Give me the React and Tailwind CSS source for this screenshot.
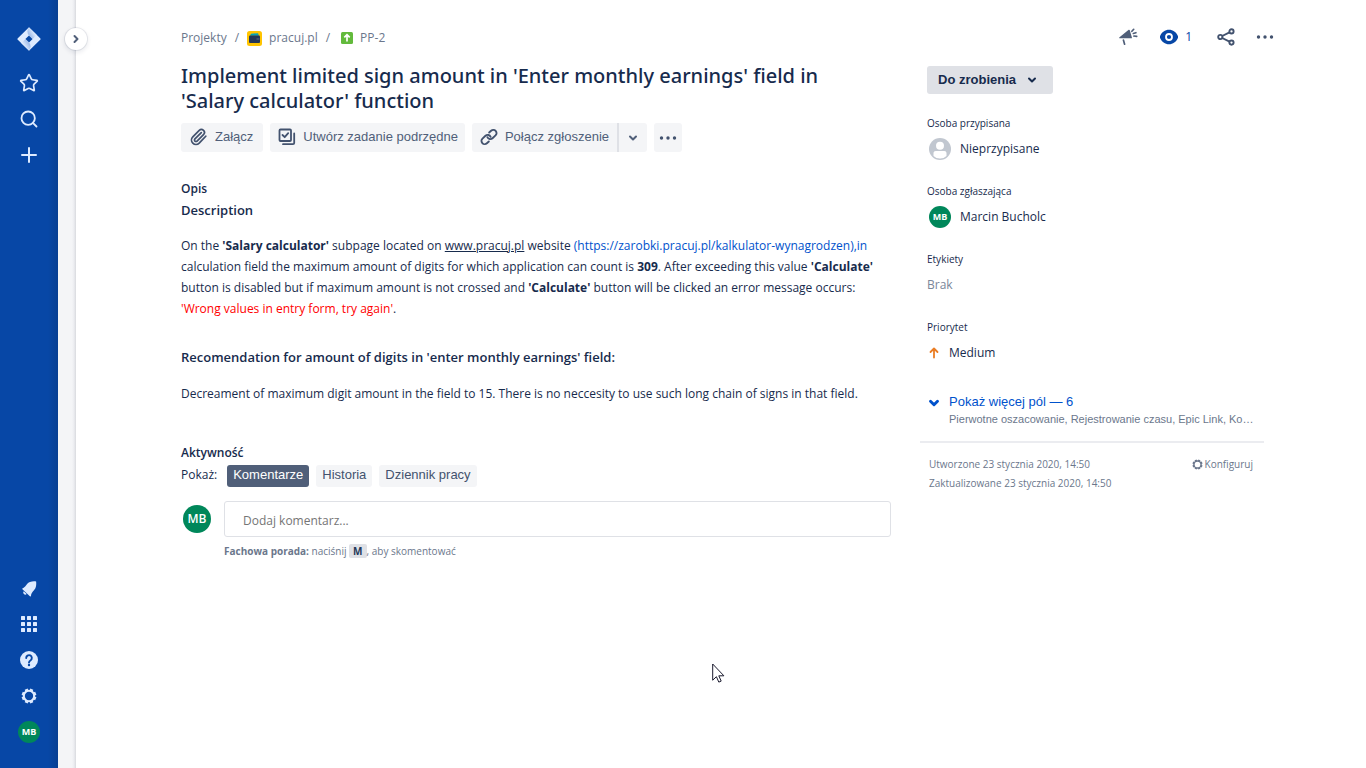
import React from "react";
import { Search, Star, Plus, ChevronRight, ChevronDown } from "lucide-react";

function JiraLogo() {
  return (
    <svg width="24" height="24" viewBox="0 0 24 24" aria-hidden="true">
      <defs>
        <linearGradient id="jiraA" x1="12" y1="8" x2="17" y2="5" gradientUnits="userSpaceOnUse">
          <stop offset="0" stopColor="#9dbae8" />
          <stop offset="1" stopColor="#deebff" />
        </linearGradient>
        <linearGradient id="jiraB" x1="12" y1="16" x2="7" y2="19" gradientUnits="userSpaceOnUse">
          <stop offset="0" stopColor="#9dbae8" />
          <stop offset="1" stopColor="#deebff" />
        </linearGradient>
      </defs>
      <path fill="#deebff" fillRule="evenodd" d="M12 .3 23.2 11.2a1.1 1.1 0 0 1 0 1.6L12 23.7.8 12.8a1.1 1.1 0 0 1 0-1.6zM12 8.4 8.4 12l3.6 3.6 3.6-3.6z" />
      <path fill="url(#jiraA)" d="M12 .5a5.800 5.800 0 0 0 0 7.900L15.600 12l4-4.300z" />
      <path fill="url(#jiraB)" d="M12 23.500a5.800 5.800 0 0 0 0-7.900L8.400 12l-4 4.300z" />
    </svg>
  );
}

function Gear({ size, color }) {
  return (
    <svg width={size} height={size} viewBox="0 0 20 20" fill="none" stroke={color} aria-hidden="true">
      <circle cx="10" cy="10" r="6.500" strokeWidth="2.600" />
      <g strokeWidth="4">
        {[22.5, 67.5, 112.5, 157.5, 202.5, 247.5, 292.5, 337.5].map((a) => (
          <path key={a} d="M10 4V.8" transform={`rotate(${a} 10 10)`} />
        ))}
      </g>
    </svg>
  );
}

function Bell() {
  return (
    <svg width="17" height="17" viewBox="0 0 18 18" fill="#deebff" aria-hidden="true">
      <path d="M1.800 8.800C5 7.600 5.800 3.300 9.500 2c2.200-.7 4.300-.8 6.500-.5.300 2.200.2 4.400-.5 6.500-1.200 3.500-4.400 4.500-4.900 8.700-.1.800-.7.900-1.200.4L1.500 9.900c-.4-.5-.3-.9.3-1.100z" />
      <path d="M2.900 11.800 6 14.900a2.200 2.200 0 0 1-3.100-3.100z" />
    </svg>
  );
}

function Grid() {
  return (
    <svg width="16" height="16" viewBox="0 0 16 16" fill="#deebff" aria-hidden="true">
      {[0, 6, 12].map((y) => [0, 6, 12].map((x) => <rect key={`${x}-${y}`} x={x} y={y} width="4" height="4" rx=".5" />))}
    </svg>
  );
}

function Help() {
  return (
    <svg width="18" height="18" viewBox="0 0 18 18" aria-hidden="true">
      <circle cx="9" cy="9" r="9" fill="#deebff" />
      <path d="M6.200 7a2.800 2.800 0 1 1 4.500 2.200C9.600 9.900 9 10.300 9 11.500" fill="none" stroke="#0747a6" strokeWidth="1.900" strokeLinecap="round" />
      <circle cx="9" cy="14" r="1.200" fill="#0747a6" />
    </svg>
  );
}

function Paperclip() {
  return (
    <svg width="18" height="18" viewBox="0 0 24 24" fill="none" stroke="#42526e" strokeWidth="2.300" strokeLinecap="round" strokeLinejoin="round" aria-hidden="true">
      <path d="m21 11-8.750 9.240a6 6 0 0 1-8.490-8.490l8.570-8.570A4 4 0 1 1 18 8.840l-8.590 8.570a2 2 0 0 1-2.830-2.830l8.490-8.480" />
    </svg>
  );
}

function Chain() {
  return (
    <svg width="18" height="18" viewBox="0 0 24 24" fill="none" stroke="#42526e" strokeWidth="2.500" strokeLinecap="round" strokeLinejoin="round" aria-hidden="true">
      <path d="M9.800 12.200a4.300 4.300 0 0 0 6.900 1.400l4-3.700a4.300 4.300 0 0 0-5.900-6.300l-2.600 2.400" />
      <path d="M14.200 11.800a4.300 4.300 0 0 0-6.900-1.400l-4 3.700a4.300 4.300 0 0 0 5.900 6.300l2.600-2.400" />
    </svg>
  );
}

function Megaphone() {
  return (
    <svg width="20" height="20" viewBox="0 0 20 20" fill="#505f79" aria-hidden="true">
      <path d="M1.500 10.200 10.700 2.800c.5-.3.900-.1 1.100.4l2.100 7.200c.1.500-.1.900-.7.900H2c-1 0-1.200-.6-.5-1.100z" />
      <g fill="none" stroke="#505f79" strokeWidth="1.700" strokeLinecap="round">
        <path d="m5.400 13 1.200 4.200M13.900 4.300l1.800-2M15.300 6.500l2.600-.8M15.900 9l2.800.4" />
      </g>
    </svg>
  );
}

function Eye() {
  return (
    <svg width="18" height="16" viewBox="0 0 18 16" aria-hidden="true">
      <path fill="#0747a6" d="M9 .8c4 0 7.200 2.400 8.800 6a2.700 2.700 0 0 1 0 2.400c-1.600 3.600-4.800 6-8.800 6s-7.200-2.400-8.800-6a2.700 2.700 0 0 1 0-2.400C1.800 3.200 5 .8 9 .8z" />
      <circle cx="9" cy="8" r="3" fill="#0747a6" stroke="#fff" strokeWidth="1.800" />
    </svg>
  );
}

function Share() {
  return (
    <svg width="18" height="18" viewBox="0 0 18 18" fill="none" stroke="#42526e" strokeWidth="1.900" aria-hidden="true">
      <circle cx="3.300" cy="9" r="2.100" />
      <circle cx="14.500" cy="3.400" r="2.100" />
      <circle cx="14.500" cy="14.600" r="2.100" />
      <path d="m5.200 8 7.300-3.700M5.200 10l7.300 3.700" />
    </svg>
  );
}

function Dots() {
  return (
    <svg width="18" height="4" viewBox="0 0 18 4" fill="#42526e" aria-hidden="true">
      <circle cx="2.500" cy="2" r="1.700" />
      <circle cx="9" cy="2" r="1.700" />
      <circle cx="15.500" cy="2" r="1.700" />
    </svg>
  );
}

function Subtask() {
  return (
    <svg width="18" height="18" viewBox="0 0 18 18" fill="none" stroke="#42526e" strokeWidth="1.800" strokeLinecap="round" strokeLinejoin="round" aria-hidden="true">
      <rect x="1.500" y="1.500" width="11.500" height="11.500" rx="1" />
      <path d="m4.500 7 2.200 2.200 3.500-4M5 16.200h10a1.200 1.200 0 0 0 1.200-1.200V5.500" />
    </svg>
  );
}

function ProjectIcon() {
  return (
    <svg width="15" height="15" viewBox="0 0 15 15" aria-hidden="true">
      <rect width="15" height="15" rx="2.500" fill="#ffc400" />
      <path d="M3 4.800 4 2.800l7-.6 1 2.600z" fill="#00a3bf" />
      <rect x="2" y="4.500" width="11" height="7.500" rx="1" fill="#253858" />
      <rect x="9.500" y="7" width="3" height="2" fill="#42526e" />
    </svg>
  );
}

function StoryIcon() {
  return (
    <svg width="12" height="12" viewBox="0 0 12 12" aria-hidden="true">
      <rect width="12" height="12" rx="1.500" fill="#63ba3c" />
      <path d="M6 9.500V3M3.300 5.400 6 2.800l2.700 2.600" fill="none" stroke="#fff" strokeWidth="1.700" />
    </svg>
  );
}

function PersonAvatar() {
  return (
    <svg width="22" height="22" viewBox="0 0 22 22" aria-hidden="true">
      <circle cx="11" cy="11" r="11" fill="#c1c7d0" />
      <circle cx="11" cy="7.800" r="4" fill="#fff" />
      <path d="M4.500 18v-2.800c0-1.300 1-2.200 2.200-2.200h8.600c1.200 0 2.200.9 2.200 2.200V18A9.300 9.300 0 0 1 11 20.500 9.300 9.300 0 0 1 4.500 18z" fill="#fff" />
    </svg>
  );
}

function Field({ label, children }) {
  return (
    <div className="mb-[21px]">
      <dt className="text-[10px] leading-5">{label}</dt>
      <dd className="mt-[5px] flex h-[22px] items-center text-[12px]">{children}</dd>
    </div>
  );
}

const navButton = "flex h-9 w-9 items-center justify-center text-[#deebff]";
const toolButton = "flex h-[29px] items-center bg-[#f4f5f7] font-['Liberation_Sans',sans-serif] text-[13px] text-[#505f79]";
const tabButton = "h-[22px] rounded-[3px] px-[6px] pb-0.5 font-['Liberation_Sans',sans-serif] text-[13px]";

function Sidebar() {
  return (
    <nav aria-label="Global" className="flex w-[58px] shrink-0 flex-col items-center justify-between bg-[#0747a6] bg-[linear-gradient(to_left,rgba(9,30,66,0.2),rgba(9,30,66,0)_10px)] pt-[21px] pb-[18px]">
      <div className="flex flex-col items-center">
        <button aria-label="Jira" className="mb-2 flex h-9 w-9 items-center justify-center"><JiraLogo /></button>
        <button aria-label="Ulubione" className={navButton}><Star size={20} strokeWidth={2} /></button>
        <button aria-label="Szukaj" className={navButton}><Search size={20} strokeWidth={2.2} /></button>
        <button aria-label="Utwórz" className={navButton}><Plus size={24} strokeWidth={2} /></button>
      </div>
      <div className="flex flex-col items-center">
        <button aria-label="Powiadomienia" className={navButton}><Bell /></button>
        <button aria-label="Aplikacje" className={navButton}><Grid /></button>
        <button aria-label="Pomoc" className={navButton}><Help /></button>
        <button aria-label="Ustawienia" className={navButton}><Gear size={16} color="#deebff" /></button>
        <button aria-label="Profil" className={navButton}>
          <span className="flex h-[22px] w-[22px] items-center justify-center rounded-full bg-[#00875a] text-[9px] font-bold text-white">MB</span>
        </button>
      </div>
    </nav>
  );
}

function Issue() {
  return (
    <article className="min-w-0 flex-1">
      <h1 className="mt-[13px] pr-5 font-['Noto_Sans',sans-serif] text-[20px] leading-[25px] font-medium">
        Implement limited sign amount in 'Enter monthly earnings' field in 'Salary calculator' function
      </h1>
      <div className="mt-[10px] flex gap-[7px]">
        <button className={`${toolButton} gap-[7px] rounded-[3px] pr-[10px] pb-0.5 pl-[9px]`}><Paperclip />Załącz</button>
        <button className={`${toolButton} gap-[7px] rounded-[3px] pr-[7px] pb-0.5 pl-2`}><Subtask />Utwórz zadanie podrzędne</button>
        <div className="flex">
          <button className={`${toolButton} gap-[7px] rounded-l-[3px] px-2 pb-0.5`}><Chain />Połącz zgłoszenie</button>
          <button aria-label="Więcej opcji połączenia" className={`${toolButton} rounded-r-[3px] border-l-2 border-[#dfe1e6] px-2`}><ChevronDown size={12} strokeWidth={4} /></button>
        </div>
        <button aria-label="Więcej" className={`${toolButton} rounded-[3px] px-[5px]`}><Dots /></button>
      </div>

      <h2 className="mt-[27px] text-[12px] leading-5 font-semibold">Opis</h2>
      <h3 className="mt-px text-[13px] leading-5 font-semibold">Description</h3>
      <p className="mt-[15px] text-[12px] leading-[21px]">
        On the <b>'Salary calculator'</b> subpage located on <a href="#pracuj" className="underline">www.pracuj.pl</a> website{" "}
        <a href="#kalkulator" className="text-[#0052cc]">(https://zarobki.pracuj.pl/kalkulator-wynagrodzen),in</a>{" "}
        calculation field the maximum amount of digits for which application can count is <b>309</b>. After exceeding this value <b>'Calculate'</b>{" "}
        button is disabled but if maximum amount is not crossed and <b>'Calculate'</b> button will be clicked an error message occurs:{" "}
        <span className="text-[#ff0000]">'Wrong values in entry form, try again'</span>.
      </p>
      <h3 className="mt-7 text-[13px] leading-5 font-semibold">Recomendation for amount of digits in 'enter monthly earnings' field:</h3>
      <p className="mt-4 text-[12px] leading-[21px]">
        Decreament of maximum digit amount in the field to 15. There is no neccesity to use such long chain of signs in that field.
      </p>

      <h2 className="mt-[39px] text-[12px] leading-5 font-semibold">Aktywność</h2>
      <div className="mt-0.5 flex h-[22px] items-center gap-[7px] text-[12px]">
        <span className="mr-[3px] pb-0.5">Pokaż:</span>
        <button className={`${tabButton} bg-[#505f79] text-white`}>Komentarze</button>
        <button className={`${tabButton} bg-[#f4f5f7] text-[#42526e]`}>Historia</button>
        <button className={`${tabButton} bg-[#f4f5f7] text-[#42526e]`}>Dziennik pracy</button>
      </div>
      <div className="mt-[14px] flex items-center pl-0.5">
        <span className="mr-[13px] flex h-7 w-7 shrink-0 items-center justify-center rounded-full bg-[#00875a] text-[12px] font-semibold text-white">MB</span>
        <input aria-label="Komentarz" placeholder="Dodaj komentarz..." className="h-9 min-w-0 flex-1 rounded-[3px] border border-[#dfe1e6] px-[18px] pt-0.5 text-[12px] placeholder:text-[#757575]" />
      </div>
      <p className="mt-1 pl-[43px] text-[10px] leading-5 text-[#6b778c]">
        <b className="font-bold">Fachowa porada:</b> naciśnij <kbd className="rounded-[2px] bg-[#dfe1e6] px-1 font-['Open_Sans',sans-serif] text-[10px] font-bold text-[#253858]">M</kbd>, aby skomentować
      </p>
    </article>
  );
}

function Details() {
  return (
    <aside className="mr-[10px] w-[344px] shrink-0">
      <div className="pl-[7px]">
        <button className="mt-4 mb-[19px] flex h-7 items-center rounded-[3px] bg-[#dfe1e6] pr-[15px] pl-[11px] font-['Liberation_Sans',sans-serif] text-[13px] font-bold">
          Do zrobienia<ChevronDown size={12} strokeWidth={4} className="ml-[10px]" />
        </button>
        <dl>
          <Field label="Osoba przypisana"><span className="mr-[9px] ml-0.5"><PersonAvatar /></span>Nieprzypisane</Field>
          <Field label="Osoba zgłaszająca">
            <span className="mr-[9px] ml-0.5 flex h-[22px] w-[22px] items-center justify-center rounded-full bg-[#00875a] text-[9px] font-bold text-white">MB</span>
            Marcin Bucholc
          </Field>
          <Field label="Etykiety"><span className="text-[#7a869a]">Brak</span></Field>
          <Field label="Priorytet">
            <svg width="10" height="12" viewBox="0 0 10 12" fill="none" stroke="#ea7d24" strokeWidth="1.800" strokeLinecap="round" strokeLinejoin="round" className="mr-[10px] ml-0.5" aria-hidden="true">
              <path d="M5 10.500V1.500M1.500 5 5 1.500 8.500 5" />
            </svg>
            Medium
          </Field>
        </dl>
        <div className="mt-7 flex items-start">
          <ChevronDown size={14} strokeWidth={5} className="mt-1 mr-2 shrink-0 text-[#0052cc]" />
          <div className="min-w-0 font-['Liberation_Sans',sans-serif]">
            <button className="block text-[13px] leading-5 text-[#0052cc]">Pokaż więcej pól — 6</button>
            <p className="text-[11px] leading-[14px] text-[#6b778c]">Pierwotne oszacowanie, Rejestrowanie czasu, Epic Link, Ko…</p>
          </div>
        </div>
      </div>
      <div className="mt-[15px] flex items-start justify-between border-t-2 border-[#ebecf0] pt-3 pr-[11px] pl-[9px] text-[10px] leading-[19px] text-[#6b778c]">
        <p>Utworzone 23 stycznia 2020, 14:50<br />Zaktualizowane 23 stycznia 2020, 14:50</p>
        <button className="flex items-center gap-0.5"><Gear size={11} color="#6b778c" />Konfiguruj</button>
      </div>
    </aside>
  );
}

export default function App() {
  return (
    <div className="relative flex min-h-screen bg-white font-['Open_Sans',sans-serif] text-[#172b4d]">
      <Sidebar />
      <div className="relative w-[18px] shrink-0 bg-[linear-gradient(to_left,#d8dade,#ebecf0_2px,#f4f5f7_4px)]">
        <button aria-label="Rozwiń" className="absolute top-7 left-[7px] z-10 flex h-[22px] w-[22px] items-center justify-center rounded-full bg-white text-[#505f79] shadow-[0_0_0_1px_rgba(9,30,66,0.08),0_2px_4px_1px_rgba(9,30,66,0.08)]">
          <ChevronRight size={12} strokeWidth={4} />
        </button>
      </div>
      <main className="min-w-0 flex-1 pt-6 pr-[92px] pl-[105px]">
        <header className="flex h-[26px] items-center justify-between">
          <nav aria-label="Ścieżka" className="flex items-center pt-0.5 text-[12px] text-[#6b778c]">
            <a href="#projekty">Projekty</a>
            <span className="mx-2">/</span>
            <a href="#pracuj-pl" className="flex items-center gap-[7px]"><ProjectIcon />pracuj.pl</a>
            <span className="mr-[11px] ml-2">/</span>
            <a href="#pp-2" className="flex items-center gap-[7px]"><StoryIcon />PP-2</a>
          </nav>
          <div className="flex items-center">
            <button aria-label="Opinia" className="mr-[22px]"><Megaphone /></button>
            <button aria-label="Obserwuj" className="mr-[25px] flex items-center gap-[7px] text-[12px] text-[#0747a6]"><Eye />1</button>
            <button aria-label="Udostępnij" className="mr-[21px]"><Share /></button>
            <button aria-label="Czynności"><Dots /></button>
          </div>
        </header>
        <div className="flex gap-[29px]">
          <Issue />
          <Details />
        </div>
      </main>
      <svg width="13" height="20" viewBox="0 0 13 20" className="pointer-events-none absolute top-[663px] left-[712px]" aria-hidden="true">
        <path d="M.7 1v16.200l3.700-3.500 2.400 5.400 2.400-1-2.400-5.300h5.100z" fill="#fff" stroke="#1a1a2e" />
      </svg>
    </div>
  );
}
